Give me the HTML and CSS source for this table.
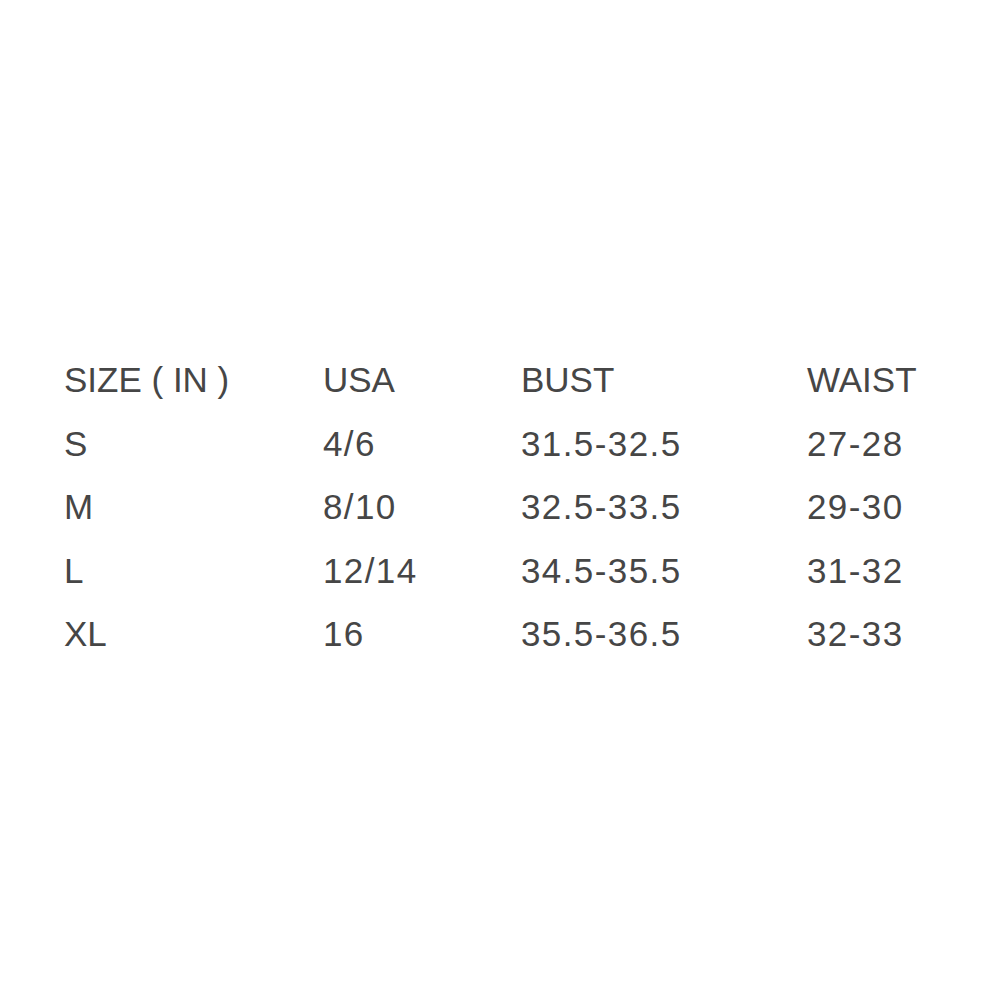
FILE: index.html
```html
<!DOCTYPE html>
<html>
<head>
<meta charset="utf-8">
<link rel="stylesheet" href="styles.css">
</head>
<body>
<main class="page">
  <div class="chart">
    <div class="cell">SIZE ( IN )</div><div class="cell">USA</div><div class="cell">BUST</div><div class="cell">WAIST</div>
    <div class="cell">S</div><div class="cell num">4/6</div><div class="cell num">31.5-32.5</div><div class="cell num">27-28</div>
    <div class="cell">M</div><div class="cell num">8/10</div><div class="cell num">32.5-33.5</div><div class="cell num">29-30</div>
    <div class="cell">L</div><div class="cell num">12/14</div><div class="cell num">34.5-35.5</div><div class="cell num">31-32</div>
    <div class="cell">XL</div><div class="cell num">16</div><div class="cell num">35.5-36.5</div><div class="cell num">32-33</div>
  </div>
</main>
</body>
</html>
```
FILE: styles.css
```css
html, body {
  margin: 0;
  padding: 0;
  background: #ffffff;
}
.page {
  width: 1000px;
  height: 1000px;
  box-sizing: border-box;
  padding: 348px 0 0 64px;
}
.chart {
  display: grid;
  grid-template-columns: 259px 198px 286px 180px;
  font-family: "Liberation Sans", Arial, sans-serif;
  font-size: 35px;
  line-height: 63.5px;
  color: #464646;
}
.cell {
  white-space: nowrap;
  letter-spacing: 0;
}
.num {
  letter-spacing: 1.4px;
}
```
